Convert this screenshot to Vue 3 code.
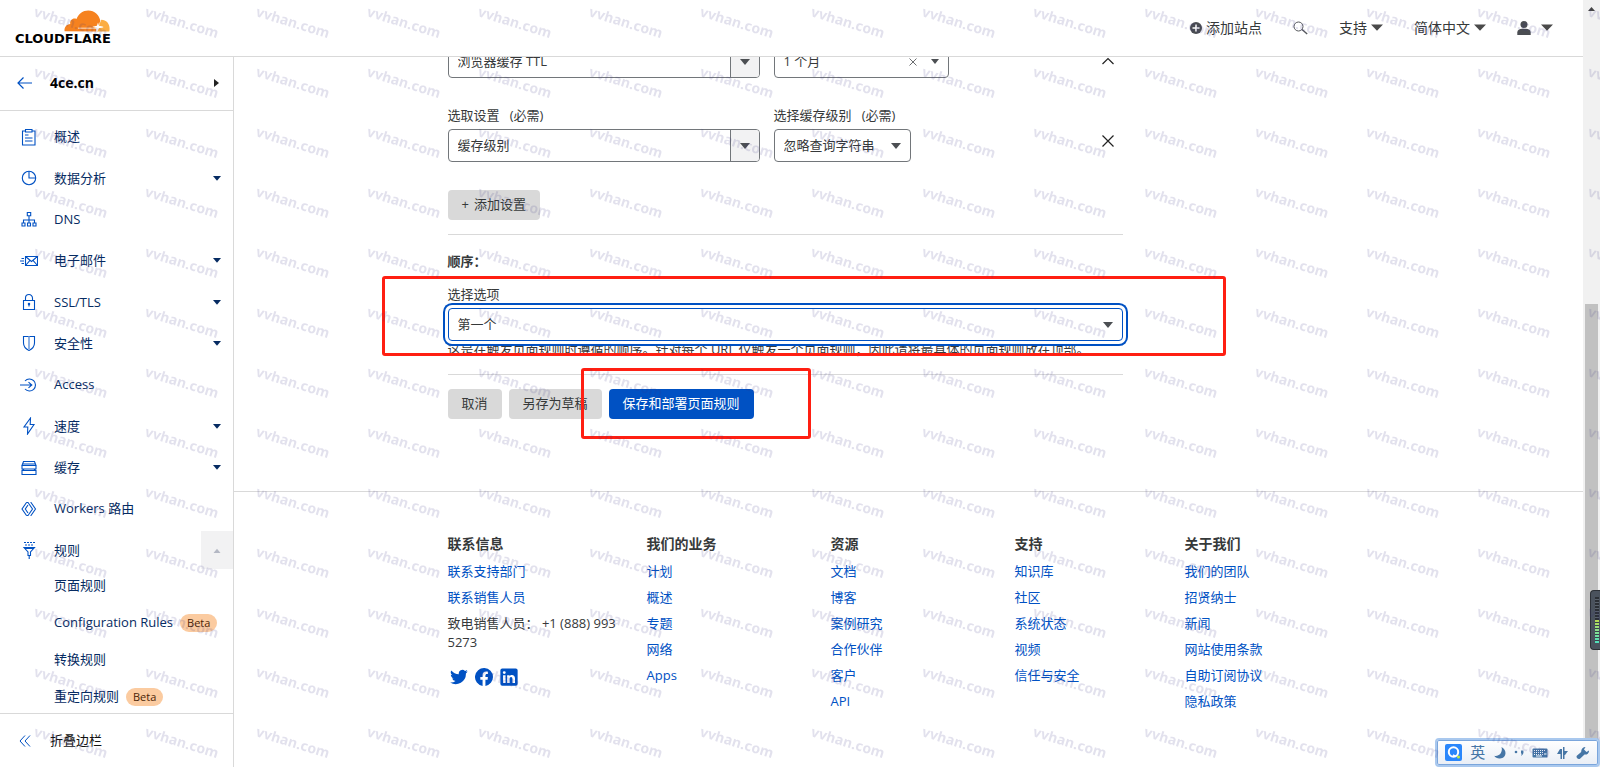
<script setup>
import { ref } from 'vue'

const navItems = [
  { icon: 'clipboard', label: '概述' },
  { icon: 'chart', label: '数据分析', expandable: true },
  { icon: 'dns', label: 'DNS' },
  { icon: 'mail', label: '电子邮件', expandable: true },
  { icon: 'lock', label: 'SSL/TLS', expandable: true },
  { icon: 'shield', label: '安全性', expandable: true },
  { icon: 'access', label: 'Access' },
  { icon: 'bolt', label: '速度', expandable: true },
  { icon: 'drive', label: '缓存', expandable: true },
  { icon: 'workers', label: 'Workers 路由' },
  { icon: 'rules', label: '规则', expandable: true, open: true }
]

const subItems = [
  { label: '页面规则' },
  { label: 'Configuration Rules', beta: true },
  { label: '转换规则' },
  { label: '重定向规则', beta: true }
]

const footerColumns = [
  { title: '我们的业务', links: ['计划', '概述', '专题', '网络', 'Apps'] },
  { title: '资源', links: ['文档', '博客', '案例研究', '合作伙伴', '客户', 'API'] },
  { title: '支持', links: ['知识库', '社区', '系统状态', '视频', '信任与安全'] },
  { title: '关于我们', links: ['我们的团队', '招贤纳士', '新闻', '网站使用条款', '自助订阅协议', '隐私政策'] }
]

const firstSetting = ref('浏览器缓存 TTL')
const ttl = ref('1 个月')
const secondSetting = ref('缓存级别')
const level = ref('忽略查询字符串')
const order = ref('第一个')
</script>

<template>
  <div class="window">
    <div class="app">
      <header class="topbar">
        <a class="logo" href="#" aria-label="Cloudflare">
          <svg class="cloud" width="46" height="22" viewBox="0 0 46 22">
            <path fill="#f6821f" d="M.6 21.3C0 17.200 2.600 14.300 6.300 14c-.8-3.600 2.700-6.600 6.200-5C14.500 3.700 19 .4 24.300.4c6.200 0 11 4.300 12 10.400l-1.700 5.200c-.4 1.200-1.400 1.600-2.600 1.700H14v.9h17c1.200.1 1.500.9 1.200 2l-.3.900z" />
            <path fill="#fbad41" d="M37.300 9.800c4.900 0 8.400 3.900 8.300 9.200 0 .9-.1 1.600-.3 2.400H32.700l.7-2.200c.3-.8 1-1.200 2-1.300l3.800-.4v-.5l-3.300-.2c-1-.1-1.200-.7-.9-1.600z" />
            <path fill="#fff" d="M34 12.500l1 3.200 4.500 1.100-4.500 1.100-1.600 3.500-1-3.400-4-1.200 4.500-1z" />
          </svg>
          <span class="wordmark">CLOUDFLARE</span>
        </a>
        <nav class="topnav" aria-label="顶部导航">
          <a href="#">
            <svg width="12" height="12" viewBox="0 0 12 12"><circle cx="6" cy="6" r="6" fill="#4a4d52" /><path d="M6 2.500v7M2.500 6h7" stroke="#fff" stroke-width="1.500" /></svg>
            <span>添加站点</span>
          </a>
          <button type="button" aria-label="搜索">
            <svg width="15" height="14" viewBox="0 0 15 14" fill="none" stroke="#55585c"><circle cx="5.500" cy="5.500" r="4.500" /><path d="M9 8.500l5.200 4.500" stroke-width="1.400" /></svg>
          </button>
          <button type="button">支持<svg class="tri" width="12" height="7" viewBox="0 0 12 7"><path d="M0 .5h12L6 6.800z" /></svg></button>
          <button type="button">简体中文<svg class="tri" width="12" height="7" viewBox="0 0 12 7"><path d="M0 .5h12L6 6.800z" /></svg></button>
          <button type="button" class="user" aria-label="帐户">
            <svg width="14" height="14" viewBox="0 0 14 14" fill="#4a4d52"><circle cx="7" cy="3.500" r="3.500" /><path d="M.3 14v-2.500C.3 9 2.500 7.800 5 7.800h4c2.500 0 4.700 1.200 4.700 3.700V14z" /></svg>
            <svg class="tri" width="12" height="7" viewBox="0 0 12 7"><path d="M0 .5h12L6 6.800z" /></svg>
          </button>
        </nav>
      </header>

      <div class="body">
        <aside class="sidebar">
          <div class="site">
            <a href="#" aria-label="返回">
              <svg width="15" height="12" viewBox="0 0 15 12" fill="none" stroke="#0051c3" stroke-width="1.200"><path d="M6.500.5L1 6l5.500 5.500M1 6h14" /></svg>
            </a>
            <strong>4ce.cn</strong>
            <button type="button" aria-label="切换站点">
              <svg width="5" height="8" viewBox="0 0 5 8"><path d="M0 0l5 4-5 4z" fill="#222" /></svg>
            </button>
          </div>

          <nav class="menu" aria-label="站点导航">
            <ul class="main-list">
              <li v-for="item in navItems" :key="item.label">
                <a href="#">
                  <svg class="icon" width="18" height="18" viewBox="0 0 18 18">
                    <g v-if="item.icon === 'clipboard'"><path d="M5.500 3h-3v14h12.500V3h-3M5.500 1.500H12V4H5.500zM5 7h3.500M5 10h7.500M5 13h7.500" /></g>
                    <g v-else-if="item.icon === 'chart'"><circle cx="9" cy="9" r="6.700" /><path d="M9 2.300V9h6.700" /></g>
                    <g v-else-if="item.icon === 'dns'"><path d="M7.300 2.500h3.400v3.300H7.300zM2 13h3v3H2zM7.500 13h3v3h-3zM13 13h3v3h-3zM9 5.800V13M3.500 13v-3h11v3" /></g>
                    <g v-else-if="item.icon === 'mail'"><path d="M5.500 4.500h12v9h-12zM5.500 4.500l6 5 6-5M5.500 13.500L10 8.300M17.500 13.500L13 8.300M1.500 6.500h2.500M0 9h4M1.500 11.500h2.500" /></g>
                    <g v-else-if="item.icon === 'lock'"><path d="M3.500 7.500h11v9h-11zM5.500 7.500V5a3.500 3.500 0 0 1 7 0v2.500M9 10.500v3" /><circle cx="9" cy="11" r=".7" /></g>
                    <g v-else-if="item.icon === 'shield'"><path d="M3.500 2.500h11V9c0 3.500-2.500 6-5.500 7.500C6 15 3.500 12.500 3.500 9z" /><path class="soft" d="M9 2.500v13.500" /></g>
                    <g v-else-if="item.icon === 'access'"><path d="M5 5a6 6 0 1 1 0 8M0 9h12M8.500 6.200L11.800 9l-3.300 2.800" /></g>
                    <g v-else-if="item.icon === 'bolt'"><path d="M10.500 1L4 10h3.800L7.500 17 14 7.500h-3.800z" /></g>
                    <g v-else-if="item.icon === 'drive'"><path d="M2 6.500l1.500-4h11l1.500 4zM2 6.500h14v3.500H2zM2 11.500h14v4H2zM2.500 5h13M2.500 11.500L4 10h10l1.500 1.500" /></g>
                    <g v-else-if="item.icon === 'workers'"><path d="M6.500 2.500L2 9l4.500 6.500M6.500 2.500h1.500L12.500 9 8 15.500H6.500M8 5L5.300 9 8 13M10.500 2.500H11L15.500 9 11 15.500h-.5" /></g>
                    <g v-else><path d="M4 1.500h11M5 4h9" stroke-dasharray="2 1" /><path d="M4 6.500h10.500L10.500 11v3.500H8V11zM9.200 15v3M4.500 7.500h9.500" /></g>
                  </svg>
                  <span>{{ item.label }}</span>
                </a>
                <button v-if="item.expandable" type="button" :class="{ open: item.open }" :aria-label="'展开' + item.label">
                  <svg width="8" height="5" viewBox="0 0 8 5"><path :d="item.open ? 'M.5 5h7L4 .8z' : 'M0 0h8L4 4.800z'" /></svg>
                </button>
              </li>
            </ul>
            <ul class="sub-list">
              <li v-for="item in subItems" :key="item.label">
                <a href="#">{{ item.label }}</a>
                <span v-if="item.beta" class="beta">Beta</span>
              </li>
            </ul>
          </nav>

          <button type="button" class="collapse">
            <svg width="12" height="12" viewBox="0 0 12 12" fill="none" stroke="#0051c3"><path d="M6 .5L1 6l5 5.500M11 .5L6 6l5 5.500" /></svg>
            <span>折叠边栏</span>
          </button>
        </aside>

        <main class="content">
          <form class="rule-form" @submit.prevent>
            <div class="setting clipped">
              <div class="field pick">
                <div class="control combo">
                  <select v-model="firstSetting" aria-label="选取设置"><option>浏览器缓存 TTL</option><option>缓存级别</option></select>
                  <svg class="caret" width="10" height="6" viewBox="0 0 10 6"><path d="M0 0h10L5 6z" /></svg>
                </div>
              </div>
              <div class="field ttl">
                <div class="control">
                  <select v-model="ttl" aria-label="输入边缘缓存 TTL"><option>1 个月</option></select>
                  <button type="button" class="clear" aria-label="清除"><svg width="8" height="8" viewBox="0 0 8 8"><path d="M.5.5l7 7M7.500.5l-7 7" stroke="#6b6d70" fill="none" /></svg></button>
                  <svg class="caret" width="8" height="5" viewBox="0 0 8 5"><path d="M0 0h8L4 5z" /></svg>
                </div>
              </div>
              <button type="button" class="row-action" aria-label="上移"><svg width="12" height="12" viewBox="0 0 12 12"><path d="M.5 9L6 3.500 11.500 9" /></svg></button>
            </div>

            <div class="setting">
              <div class="field pick">
                <label for="second-setting">选取设置 &nbsp; (必需)</label>
                <div class="control combo">
                  <select id="second-setting" v-model="secondSetting"><option>缓存级别</option><option>浏览器缓存 TTL</option></select>
                  <svg class="caret" width="10" height="6" viewBox="0 0 10 6"><path d="M0 0h10L5 6z" /></svg>
                </div>
              </div>
              <div class="field level">
                <label for="cache-level">选择缓存级别 &nbsp; (必需)</label>
                <div class="control">
                  <select id="cache-level" v-model="level"><option>忽略查询字符串</option></select>
                  <svg class="caret" width="10" height="6" viewBox="0 0 10 6"><path d="M0 0h10L5 6z" /></svg>
                </div>
              </div>
              <button type="button" class="row-action" aria-label="删除"><svg width="12" height="12" viewBox="0 0 12 12"><path d="M.5.5l11 11M11.500.5l-11 11" /></svg></button>
            </div>

            <button type="button" class="btn add"><span>+</span>添加设置</button>

            <section class="order">
              <h2>顺序：</h2>
              <label for="order">选择选项</label>
              <div class="control focused">
                <select id="order" v-model="order"><option>第一个</option><option>最后一个</option></select>
                <svg class="caret" width="10" height="6" viewBox="0 0 10 6"><path d="M0 0h10L5 6z" /></svg>
              </div>
              <p>这是在触发页面规则时遵循的顺序。针对每个 URL 仅触发一个页面规则，因此请将最具体的页面规则放在顶部。</p>
              <div class="mark mark-order"></div>
            </section>

            <div class="actions">
              <button type="button" class="btn">取消</button>
              <button type="button" class="btn">另存为草稿</button>
              <button type="submit" class="btn primary">保存和部署页面规则</button>
              <div class="mark mark-save"></div>
            </div>
          </form>

          <footer class="footer">
            <div class="footer-inner">
              <section>
                <h3>联系信息</h3>
                <ul>
                  <li><a href="#">联系支持部门</a></li>
                  <li><a href="#">联系销售人员</a></li>
                  <li>致电销售人员： +1 (888) 993 5273</li>
                </ul>
                <div class="social">
                  <a href="#" aria-label="Twitter"><svg width="18" height="18" viewBox="0 0 24 24"><path d="M23.600 4.700c-.9.4-1.800.6-2.700.8a4.800 4.800 0 0 0 2.100-2.700c-.9.6-2 1-3 1.200a4.800 4.800 0 0 0-8.200 4.400C7.800 8.200 4.200 6.300 1.800 3.300a4.800 4.800 0 0 0 1.500 6.400c-.8 0-1.500-.2-2.200-.6 0 2.400 1.700 4.400 3.900 4.800-.7.2-1.500.2-2.200.1a4.800 4.800 0 0 0 4.500 3.300A9.600 9.600 0 0 1 .2 19.300 13.600 13.600 0 0 0 21.200 7.200c.9-.7 1.700-1.500 2.400-2.500z" /></svg></a>
                  <a href="#" aria-label="Facebook"><svg width="18" height="18" viewBox="0 0 24 24"><path d="M24 12a12 12 0 1 0-13.900 11.900v-8.400H7.100V12h3V9.400c0-3 1.800-4.700 4.600-4.700 1.300 0 2.700.2 2.700.2v3h-1.500c-1.500 0-2 .9-2 1.900V12h3.400l-.5 3.500h-2.900v8.400A12 12 0 0 0 24 12z" /></svg></a>
                  <a href="#" aria-label="LinkedIn"><svg width="18" height="18" viewBox="0 0 24 24"><path fill-rule="evenodd" d="M3 .5h18A2.500 2.500 0 0 1 23.500 3v18a2.500 2.500 0 0 1-2.500 2.500H3A2.500 2.500 0 0 1 .5 21V3A2.500 2.500 0 0 1 3 .5zM4.100 9.500v10.400h3.300V9.500zM5.700 4.200a1.900 1.900 0 1 0 0 3.900 1.900 1.900 0 0 0 0-3.900zM9.500 9.500v10.400h3.300v-5.200c0-1.700.6-2.600 1.900-2.600s1.900.9 1.900 2.700v5.100H20v-6c0-3-1.600-4.600-4-4.600-1.500 0-2.600.7-3.200 1.800V9.500z" /></svg></a>
                </div>
              </section>
              <section v-for="column in footerColumns" :key="column.title">
                <h3>{{ column.title }}</h3>
                <ul>
                  <li v-for="link in column.links" :key="link"><a href="#">{{ link }}</a></li>
                </ul>
              </section>
            </div>
          </footer>
        </main>
      </div>
    </div>

    <div class="scrollbar">
      <svg width="7" height="4" viewBox="0 0 7 4"><path d="M0 4h7L3.500 0z" fill="#444" /></svg>
      <div class="thumb"></div>
    </div>

    <div class="meter"><i class="idle"></i><i class="live"></i></div>

    <div class="ime">
      <svg width="17" height="17" viewBox="0 0 17 17"><rect width="17" height="17" rx="2" fill="#2b87fb" /><circle cx="8.500" cy="8" r="4.700" fill="none" stroke="#fff" stroke-width="2" /><path d="M8 11l3 1.500" stroke="#fff" stroke-width="1.500" /><circle cx="13.500" cy="13" r="1.500" fill="#c6ee3c" /></svg>
      <span>英</span>
      <svg width="12" height="12" viewBox="0 0 12 12"><path fill="#4676a6" d="M7.500 0C13.500 3 12.500 11 6 11.500 3.500 11.700 1.500 10.700.2 8.800 5.500 10 9 5 7.500 0z" /></svg>
      <svg width="10" height="8" viewBox="0 0 10 8" fill="#4676a6"><circle cx="2" cy="3" r="1.300" /><path d="M7 1.500h2.300C10 4 9 6 7 7c.8-1.500.8-2 0-3z" /></svg>
      <svg width="16" height="10" viewBox="0 0 16 10"><rect x=".5" y=".5" width="15" height="9" rx="1" fill="#4676a6" /><path d="M2 2.500h12M2 4.500h9M2 6.500h9" stroke="#f4f8fd" stroke-dasharray="1 1" /><path d="M4 8h6M12 6h2.500" stroke="#f4f8fd" /></svg>
      <svg width="11" height="12" viewBox="0 0 11 12" fill="#4676a6"><path d="M3 2h2v10H3.500V7H0zM6 0h1.500v12H6zM7 4h4L8 8H7z" /></svg>
      <svg width="13" height="12" viewBox="0 0 13 12"><path fill="#4676a6" d="M9.500 0L8 2.500 10.500 5 13 3.500c.2 2.500-2 4.500-4.500 4L4 11.700c-2 1-4.300-1-3.200-3L5.200 5C5 2 7 0 9.500 0z" /></svg>
    </div>

    <svg class="watermark" width="100%" height="100%" aria-hidden="true">
      <defs>
        <pattern id="site-mark" width="111" height="60" patternUnits="userSpaceOnUse" x="30" y="0">
          <text x="3" y="16" transform="rotate(17 3 16)">vvhan.com</text>
        </pattern>
      </defs>
      <rect width="100%" height="100%" fill="url(#site-mark)" />
    </svg>
  </div>
</template>

<style>
body {
  margin: 0;
  overflow: hidden;
}
</style>

<style scoped>
.window {
  position: relative;
  display: flex;
  height: 100vh;
  overflow: hidden;
  background: #fff;
  color: #36393a;
  font-family: "Open Sans", "Noto Sans", "Noto Sans CJK SC", sans-serif;
  font-size: 13px;
  line-height: 19px;
}
.window *, .window *::before { box-sizing: border-box; }
a { color: #0051c3; text-decoration: none; }
ul { list-style: none; margin: 0; padding: 0; }
button, select { font: inherit; color: inherit; }
button { border: 0; background: none; padding: 0; }
svg { display: block; flex: none; }

.app { flex: 1; min-width: 0; display: flex; flex-direction: column; }

.topbar {
  display: flex;
  justify-content: space-between;
  align-items: center;
  flex: none;
  height: 57px;
  padding: 0 30px 0 15px;
  border-bottom: 1px solid #d9d9d9;
}
.logo { display: flex; flex-direction: column; width: 95px; padding-bottom: 1px; }
.cloud { align-self: flex-end; }
.wordmark {
  color: #000;
  font-family: "DejaVu Sans", sans-serif;
  font-size: 13px;
  font-weight: 700;
  line-height: 14px;
}
.topnav { display: flex; align-items: center; gap: 31px; padding-bottom: 1px; font-size: 14px; }
.topnav a, .topnav button { display: flex; align-items: center; gap: 4px; color: #36393a; }
.topnav .user { gap: 10px; }
.tri { fill: #4a4a4a; }

.body { flex: 1; min-height: 0; display: flex; }
.sidebar {
  display: flex;
  flex-direction: column;
  flex: none;
  width: 234px;
  border-right: 1px solid #d9d9d9;
}
.site {
  display: flex;
  align-items: center;
  flex: none;
  height: 54px;
  padding: 0 14px 2px 17px;
  border-bottom: 1px solid #d9d9d9;
  color: #000;
}
.site strong { flex: 1; margin-left: 18px; font-size: 14px; }
.menu {
  flex: 1;
  min-height: 0;
  overflow: hidden;
  display: flex;
  flex-direction: column;
  padding-top: 5px;
}
.main-list { flex: 1; display: flex; flex-direction: column; }
.main-list li { flex: 1; display: flex; align-items: center; }
.main-list a { flex: 1; display: flex; align-items: center; gap: 16px; padding-left: 20px; }
.menu a { color: #062b62; }
.main-list button {
  display: flex;
  align-items: center;
  justify-content: center;
  width: 32px;
  height: 38px;
  fill: #062b62;
}
.main-list .open { background: #f2f2f3; fill: #b4b8c4; }
.icon { fill: none; stroke: #0051c3; stroke-width: 1.1; }
.soft { stroke: #8fb2e4; stroke-width: 2; }
.sub-list { margin: -4px 0 -2px; }
.sub-list li { display: flex; align-items: center; gap: 7px; height: 37px; padding-left: 54px; }
.beta {
  padding: 0 7px;
  border-radius: 9px;
  background: #fbcba0;
  color: #4b1f06;
  font-size: 11px;
  line-height: 18px;
}
.collapse {
  display: flex;
  align-items: center;
  gap: 19px;
  flex: none;
  height: 54px;
  padding-left: 19px;
  border-top: 1px solid #d9d9d9;
  color: #111;
}

.content { flex: 1; min-width: 0; overflow: hidden; }
.rule-form, .footer-inner { width: 922px; max-width: 100%; margin: 0 auto; }
.rule-form { padding-right: 247px; }
.setting { display: flex; gap: 14px; position: relative; margin-bottom: 28px; }
.setting.clipped { margin-top: -12px; margin-bottom: 27px; align-items: flex-start; }
.pick { width: 312px; }
.ttl { width: 175px; }
.level { width: 137px; }
label { display: block; padding-bottom: 4px; line-height: 20px; }
.control {
  position: relative;
  display: flex;
  border: 1px solid #72767a;
  border-radius: 4px;
  background: #fff;
}
.control select {
  appearance: none;
  width: 100%;
  height: 31px;
  padding: 0 30px 0 9px;
  border: 0;
  border-radius: 4px;
  background: none;
  outline: none;
}
.combo::before {
  content: "";
  position: absolute;
  inset: 0 0 0 auto;
  width: 29px;
  border-left: 1px solid #72767a;
  border-radius: 0 3px 3px 0;
  background: #f2f2f3;
}
.caret { position: absolute; right: 9px; top: 13px; fill: #4c4f53; pointer-events: none; }
.clear { position: absolute; right: 31px; top: 12px; }
.row-action { position: absolute; right: 9px; bottom: 15px; }
.clipped .row-action { bottom: 11px; }
.row-action svg { fill: none; stroke: #222; stroke-width: 1.2; }
.btn {
  height: 30px;
  padding: 0 14px 2px;
  border-radius: 4px;
  background: #d9d9d9;
  color: #36393a;
  white-space: nowrap;
}
.add { display: flex; align-items: center; gap: 5px; }
.btn.primary { background: #0051c3; color: #fff; }

.order {
  position: relative;
  margin-top: 14px;
  padding-bottom: 16px;
  border-top: 1px solid #d9d9d9;
  border-bottom: 1px solid #d9d9d9;
}
h2 { margin: 17px 0 13px; font-size: 13px; line-height: 19px; }
.order .control { z-index: 1; border-color: #0051c3; box-shadow: 0 0 0 3px #fff, 0 0 0 5px #0051c3; }
.order p { margin: 0; line-height: 17px; white-space: nowrap; }
.mark { position: absolute; z-index: 2; border: 3px solid #ff1f12; border-radius: 3px; pointer-events: none; }
.mark-order { inset: 41px -103px 18px -66px; }
.actions { position: relative; display: flex; gap: 7px; padding: 14px 0 72px; }
.mark-save { left: 133px; top: -7px; width: 230px; height: 71px; }

.footer { border-top: 1px solid #d9d9d9; }
.footer-inner {
  display: grid;
  grid-template-columns: 199fr 184fr 184fr 170fr 185fr;
  padding-top: 42px;
}
.footer h3 { margin: 0 0 8px; font-size: 14px; line-height: 20px; }
.footer li { margin-bottom: 7px; padding-right: 25px; }
.social { display: flex; gap: 7px; margin-top: 16px; padding-left: 2px; }
.social svg { fill: #0051c3; }

.scrollbar {
  flex: none;
  display: flex;
  flex-direction: column;
  width: 17px;
  padding: 7px 2px 17px;
  background: #f1f1f1;
}
.scrollbar svg { align-self: center; }
.thumb { flex: none; height: 60%; margin-top: auto; background: #c1c1c1; }

.meter {
  position: absolute;
  right: 0;
  bottom: 117px;
  width: 10px;
  padding: 6px 2px 6px 4px;
  border: 1px solid #2c3036;
  border-right: 0;
  border-radius: 4px 0 0 4px;
  background: #4a525d;
}
.meter i { display: block; width: 4px; height: 23px; }
.idle { background: repeating-linear-gradient(#2b2f35 0 2px, #5a626c 2px 3px); }
.live {
  background: repeating-linear-gradient(transparent 0 2px, #39434d 2px 3px), linear-gradient(#b9dc4e, #8be08c 45%, #4ee0bd);
}

.ime {
  position: absolute;
  right: 0;
  bottom: 0;
  display: flex;
  align-items: center;
  justify-content: space-between;
  width: 165px;
  height: 29px;
  padding: 0 9px 0 8px;
  border: 2px solid #a9c8ee;
  border-radius: 4px;
  background: linear-gradient(#fff, #e9eef6);
  box-shadow: inset 0 0 0 1px #7ba6dc;
  color: #4676a6;
  font-size: 15px;
}

.watermark { position: absolute; inset: 0; pointer-events: none; z-index: 5; }
.watermark text {
  font-family: "Noto Sans", sans-serif;
  font-size: 14px;
  font-weight: 700;
  fill: #32287d;
  fill-opacity: 0.14;
}
</style>
